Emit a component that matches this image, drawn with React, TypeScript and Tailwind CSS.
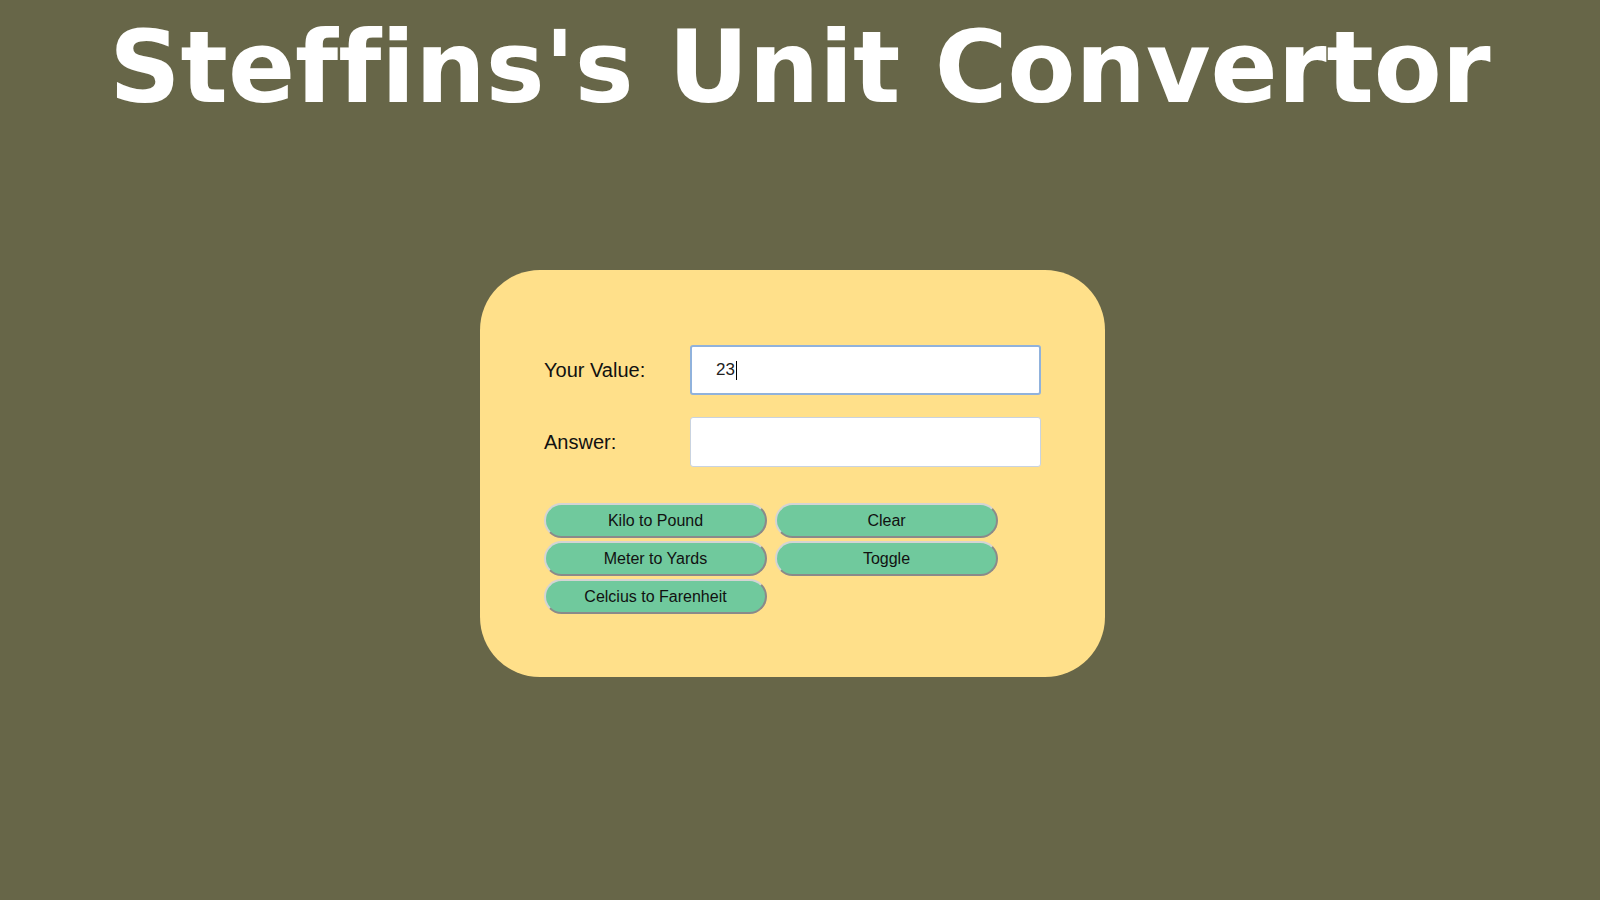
import React from "react";

export default function App() {
  const btn =
    "h-[35px] w-[223px] rounded-full bg-[#70c99d] text-[16px] text-[#111] border-2 border-t-[#d4d4d4] border-l-[#d4d4d4] border-r-[#8a8a8a] border-b-[#8a8a8a] flex items-center justify-center leading-none";
  return (
    <div
      className="min-h-[900px] w-full bg-[#676648] flex flex-col items-center"
      style={{ fontFamily: '"Liberation Sans", Arial, sans-serif' }}
    >
      <h1
        className="text-white font-bold text-[99px] leading-none pt-[18px] text-center [font-variant-ligatures:none]"
        style={{ fontFamily: '"DejaVu Sans", Verdana, sans-serif' }}
      >
        Steffins's Unit Convertor
      </h1>
      <div className="w-full flex justify-center pr-[15px] mt-[153px]">
        <div className="w-[625px] h-[407px] rounded-[60px] bg-[#ffe08a] px-[64px] pt-[75px]">
          <div className="flex items-center h-[50px]">
            <div className="w-[146px] text-[20px] text-[#111]">Your Value:</div>
            <div className="w-[351px] h-[50px] bg-white border-2 border-[#90b2dc] rounded-[3px] flex items-center pl-[24px] text-[17px] text-[#222]">
              23<span className="inline-block w-px h-[19px] bg-black ml-[1px]"></span>
            </div>
          </div>
          <div className="flex items-center h-[50px] mt-[22px]">
            <div className="w-[146px] text-[20px] text-[#111]">Answer:</div>
            <div className="w-[351px] h-[50px] bg-white border border-[#c9d3e0] rounded-[3px]"></div>
          </div>
          <div className="mt-[36px] grid grid-cols-[223px_223px] gap-x-[8px] gap-y-[3px]">
            <button className={btn}>Kilo to Pound</button>
            <button className={btn}>Clear</button>
            <button className={btn}>Meter to Yards</button>
            <button className={btn}>Toggle</button>
            <button className={btn}>Celcius to Farenheit</button>
          </div>
        </div>
      </div>
    </div>
  );
}
